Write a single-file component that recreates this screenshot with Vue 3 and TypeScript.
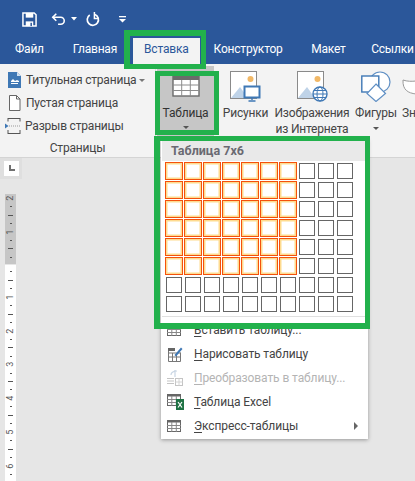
<script setup lang="ts">
interface MenuRow {
  key: string;
  label: string;
  hotkey: string;
  disabled?: boolean;
  submenu?: boolean;
}

const tabs = ['Файл', 'Главная', 'Вставка', 'Конструктор', 'Макет', 'Ссылки'];
const activeTab = 'Вставка';

const selCols = 7;
const selRows = 6;
const cells: boolean[] = [];
for (let r = 0; r < 8; r++) {
  for (let c = 0; c < 10; c++) {
    cells.push(r < selRows && c < selCols);
  }
}

const menuRows: MenuRow[] = [
  { key: 'insert', hotkey: 'В', label: 'ставить таблицу...' },
  { key: 'draw', hotkey: 'Н', label: 'арисовать таблицу' },
  { key: 'convert', hotkey: 'П', label: 'реобразовать в таблицу...', disabled: true },
  { key: 'excel', hotkey: 'Т', label: 'аблица Excel' },
  { key: 'quick', hotkey: 'Э', label: 'кспресс-таблицы', submenu: true },
];

// ruler marks: 4 per cm, digit on every 4th
const ticksTop = [
  { t: 'num', v: '2' }, { t: 's' }, { t: 'l' }, { t: 's' },
  { t: 'num', v: '1' }, { t: 's' }, { t: 'l' }, { t: 's' },
];
const ticksBottom: { t: string; v?: string }[] = [];
for (let n = 1; n <= 6; n++) {
  ticksBottom.push({ t: 's' }, { t: 'l' }, { t: 's' }, { t: 'num', v: String(n) });
}
ticksBottom.push({ t: 's' });
</script>

<template>
  <div class="word">
    <header class="titlebar">
      <div class="qat">
        <svg class="qat-save" width="15" height="15" viewBox="0 0 16 16">
          <path d="M1 1h12l2 2v12H1z" fill="none" stroke="#fff" stroke-width="1.6" />
          <rect x="4" y="1" width="8" height="5" fill="#fff" />
          <rect x="4" y="10" width="8" height="5" fill="#fff" />
          <rect x="9" y="11.5" width="1.6" height="3.5" fill="#2b579a" />
        </svg>
        <svg class="qat-undo" width="15" height="14" viewBox="0 0 17 15">
          <path d="M2 5.500h9a4 4 0 0 1 0 8H8" fill="none" stroke="#fff" stroke-width="1.8" />
          <path d="M6 1.500 2 5.500l4 4" fill="none" stroke="#fff" stroke-width="1.8" />
        </svg>
        <svg class="qat-caret" width="6" height="4" viewBox="0 0 6 4"><path d="M0 0h6L3 3.500z" fill="#fff" /></svg>
        <svg class="qat-redo" width="14" height="15" viewBox="0 0 15 16">
          <path d="M9.500 2.600a6 6 0 1 1-5.500 .6" fill="none" stroke="#fff" stroke-width="1.8" />
          <path d="M9 0v7H14" fill="none" stroke="#fff" stroke-width="1.6" />
        </svg>
        <svg class="qat-more" width="7" height="7" viewBox="0 0 7 7">
          <rect x="0" y="0" width="7" height="1.3" fill="#fff" />
          <path d="M0 3h7L3.500 6.600z" fill="#fff" />
        </svg>
      </div>
      <nav class="tabs">
        <span v-for="tab in tabs" :key="tab" class="tab" :class="{ active: tab === activeTab }">{{ tab }}</span>
      </nav>
    </header>

    <section class="ribbon">
      <div class="group pages">
        <div class="page-rows">
          <div class="page-row">
            <svg width="13" height="16" viewBox="0 0 13 16">
              <path d="M0 0h9l4 4v12H0z" fill="#3f78b5" />
              <path d="M9 0v4h4z" fill="#cfe0f0" />
              <path d="M3 9l2-2 2 2 2-1 2 1v1H3z" fill="#fff" />
              <rect x="3" y="11" width="7" height="1" fill="#fff" />
            </svg>
            <span>Титульная страница</span>
            <i class="caret"></i>
          </div>
          <div class="page-row">
            <svg width="13" height="16" viewBox="0 0 13 16">
              <path d="M1.500 .5h7l3.500 3.500v11.500H1.500z" fill="#fff" stroke="#666" />
              <path d="M8.500 .5v3.500H12" fill="none" stroke="#666" />
            </svg>
            <span>Пустая страница</span>
          </div>
          <div class="page-row">
            <svg class="break-icon" width="16" height="16" viewBox="0 0 16 16">
              <path d="M3 .5h12M3 15.500h12M3 0v3.500M15 0v3.500M3 12v4M15 12v4" fill="none" stroke="#555" />
              <path d="M0 5.500l3.500 2.500L0 10.500z" fill="#3f78b5" />
              <path d="M4 8h11" stroke="#999" stroke-dasharray="1 1" />
            </svg>
            <span>Разрыв страницы</span>
          </div>
        </div>
        <div class="group-label">Страницы</div>
      </div>

      <div class="table-btn">
        <svg width="28" height="22" viewBox="0 0 28 22">
          <rect x="1" y="1" width="26" height="20" fill="#fff" stroke="#6b6b6b" stroke-width="1.400" />
          <rect x="1" y="1" width="26" height="4" fill="#6b6b6b" />
          <path d="M1 10h26M1 15.500h26M9.700 5v16M18.300 5v16" stroke="#8c8c8c" stroke-width="1" />
        </svg>
        <span class="big-label">Таблица</span>
        <i class="caret dark"></i>
      </div>

      <div class="big-btn pictures">
        <svg width="31" height="31" viewBox="0 0 31 31">
          <rect x=".5" y=".5" width="26" height="27" fill="#fff" stroke="#8a8a8a" />
          <circle cx="20.500" cy="8" r="3" fill="#f1b867" />
          <path d="M1 27l9-11 8 11z" fill="#bfd3e8" />
          <rect x="14.500" y="15.500" width="15" height="11" fill="#fff" stroke="#3f78b5" stroke-width="2" />
          <path d="M22 27v2M18.500 30h7" stroke="#3f78b5" stroke-width="1.400" />
        </svg>
        <span class="big-label">Рисунки</span>
      </div>

      <div class="big-btn online">
        <svg width="31" height="31" viewBox="0 0 31 31">
          <rect x=".5" y=".5" width="26" height="27" fill="#fff" stroke="#8a8a8a" />
          <circle cx="20.500" cy="8" r="3" fill="#f1b867" />
          <path d="M1 27l9-11 8 11z" fill="#bfd3e8" />
          <circle cx="23" cy="23" r="7" fill="#fff" stroke="#3f78b5" stroke-width="1.400" />
          <ellipse cx="23" cy="23" rx="3" ry="7" fill="none" stroke="#3f78b5" />
          <path d="M16 23h14M17 19.500h12M17 26.500h12" stroke="#3f78b5" />
        </svg>
        <span class="big-label">Изображения<br />из Интернета</span>
      </div>

      <div class="big-btn shapes">
        <svg width="30" height="31" viewBox="0 0 30 31">
          <circle cx="19" cy="11" r="10" fill="#fff" stroke="#5f8fc4" stroke-width="1.200" />
          <rect x=".8" y="5" width="17" height="16" fill="#fff" stroke="#3f78b5" stroke-width="1.400" />
          <path d="M15 13l9.500 9.500-9.500 8-9-8z" fill="#fff" stroke="#5f8fc4" stroke-width="1.200" />
        </svg>
        <span class="big-label">Фигуры</span>
        <i class="caret dark"></i>
      </div>

      <div class="big-btn signs">
        <svg width="14" height="17" viewBox="0 0 14 17">
          <path d="M14 15C6 14 .5 11 1 1c4 1.500 9 1.500 13 1" fill="#fff" stroke="#9a9a9a" />
        </svg>
        <span class="big-label">Зн</span>
      </div>
    </section>

    <main class="workspace">
      <aside class="side">
        <div class="corner"><span class="corner-mark"></span></div>
        <div class="ruler">
          <div class="ruler-dark">
            <span v-for="(m, i) in ticksTop" :key="i" class="mark" :class="m.t">{{ m.v }}</span>
          </div>
          <div class="ruler-white">
            <span v-for="(m, i) in ticksBottom" :key="i" class="mark" :class="m.t">{{ m.v }}</span>
          </div>
        </div>
      </aside>

      <div class="table-menu">
        <div class="menu-head">Таблица 7x6</div>
        <div class="picker">
          <span v-for="(sel, i) in cells" :key="i" class="cell" :class="{ sel }"></span>
        </div>
        <div class="menu-sep"></div>
        <div v-for="row in menuRows" :key="row.key" class="menu-row" :class="{ disabled: row.disabled }">
          <span class="menu-icon">
            <svg v-if="row.key === 'insert' || row.key === 'quick'" width="14" height="12" viewBox="0 0 14 12">
              <rect x=".5" y=".5" width="13" height="11" fill="#fff" stroke="#666" />
              <rect x="0" y="0" width="14" height="2.500" fill="#666" />
              <path d="M0 5.500h14M0 8.500h14M4.800 2v10M9.300 2v10" stroke="#888" />
            </svg>
            <svg v-else-if="row.key === 'draw'" width="16" height="16" viewBox="0 0 16 16">
              <path d="M1.500 2.500v13h12v-9M1.500 7h12M1.500 11h12M5.500 7v8.500M9.500 7v8.500" fill="none" stroke="#777" />
              <rect x="1" y="2" width="7" height="3" fill="#666" />
              <path d="M7.500 9 14 1.500l1.500 1.500L9 10.500z" fill="#3f78b5" />
            </svg>
            <svg v-else-if="row.key === 'convert'" width="16" height="16" viewBox="0 0 16 16">
              <path d="M0 8.500h7M0 11h7M0 13.500h7" stroke="#c4c4c4" />
              <rect x="8.500" y="8.500" width="7" height="7" fill="none" stroke="#c4c4c4" />
              <path d="M8.500 12h7M12 8.500v7" stroke="#d4d4d4" />
              <path d="M4 5c0-3 3-4 6-4M8 0v7" fill="none" stroke="#c9d6e4" stroke-width="1.200" />
            </svg>
            <svg v-else width="17" height="16" viewBox="0 0 17 16">
              <rect x=".5" y=".5" width="13" height="11" fill="#fff" stroke="#666" />
              <rect x="0" y="0" width="14" height="2.500" fill="#666" />
              <path d="M0 5.500h14M0 8.500h14M4.800 2v10M9.300 2v10" stroke="#888" />
              <rect x="9" y="5" width="8" height="11" fill="#1f7244" />
              <path d="M11 8l4 5.500M15 8l-4 5.500" stroke="#fff" stroke-width="1.200" />
            </svg>
          </span>
          <span class="menu-text"><u>{{ row.hotkey }}</u>{{ row.label }}</span>
          <i v-if="row.submenu" class="sub-arrow"></i>
        </div>
      </div>

      <div class="frame frame-tab"></div>
      <div class="frame frame-btn"></div>
      <div class="frame frame-grid"></div>
    </main>
  </div>
</template>

<style scoped>
.word {
  position: relative;
  width: 415px;
  height: 481px;
  overflow: hidden;
  display: flex;
  flex-direction: column;
  background: #e6e6e6;
  font-family: Roboto, "Open Sans", sans-serif;
  font-size: 12px;
  letter-spacing: -0.2px;
  color: #444;
}

.titlebar {
  height: 64px;
  background: #2b579a;
  display: flex;
  flex-direction: column;
  flex: none;
}

.qat {
  height: 38px;
  display: flex;
  align-items: center;
  padding-left: 22px;
}
.qat-undo { margin-left: 14px; }
.qat-caret { margin-left: 5px; }
.qat-redo { margin-left: 9px; }
.qat-more { margin-left: 19px; }

.tabs {
  height: 26px;
  display: flex;
  white-space: nowrap;
}
.tab {
  color: #fff;
  line-height: 22px;
  padding: 0 13.5px;
}
.tab:first-child { padding: 0 15.5px 0 15px; }
.tab:nth-child(4) { padding: 0 15px 0 12px; }
.tab:nth-child(5) { padding-right: 12px; }
.tab.active {
  background: #f3f3f3;
  color: #2b579a;
  border-left: 2px solid #2b579a;
  border-right: 2px solid #2b579a;
  padding: 0 11px 0 11.5px;
}

.ribbon {
  height: 93px;
  flex: none;
  background: #f3f3f3;
  border-bottom: 1px solid #d4d4d4;
  display: flex;
  white-space: nowrap;
  color: #444;
}

.group.pages {
  width: 155px;
  flex: none;
  display: flex;
  flex-direction: column;
  border-right: 1px solid #dcdcdc;
}
.page-rows {
  padding: 5px 0 0 8px;
  display: flex;
  flex-direction: column;
  gap: 1px;
  flex: 1;
}
.page-row {
  height: 22px;
  display: flex;
  align-items: center;
  gap: 5px;
}
.page-row svg { flex: none; width: 13px; }
.page-row .break-icon { width: 16px; margin-left: -3px; margin-right: -1px; }
.group-label {
  text-align: center;
  line-height: 22px;
  margin-bottom: -2px;
  padding-bottom: 0;
}

.caret {
  display: inline-block;
  width: 0;
  height: 0;
  border-left: 3.5px solid transparent;
  border-right: 3.5px solid transparent;
  border-top: 3.5px solid #777;
  margin-left: -2px;
}
.caret.dark { border-top-color: #555; margin-left: 0; }

.table-btn {
  width: 57px;
  margin: 2px 0 0 1px;
  flex: none;
  height: 70px;
  background: #c6c6c6;
  display: flex;
  flex-direction: column;
  align-items: center;
  padding-top: 9px;
  box-sizing: border-box;
  color: #333;
}
.big-label {
  display: block;
  text-align: center;
  line-height: 16px;
}
.table-btn .big-label { margin-top: 8px; margin-bottom: 5px; }

.big-btn {
  flex: none;
  display: flex;
  flex-direction: column;
  align-items: center;
  padding-top: 7px;
  box-sizing: border-box;
}
.big-btn svg { flex: none; }
.big-btn .big-label { margin-top: 3px; }
.big-btn .caret { margin-top: 6px; }
.pictures { width: 53px; margin-left: 5px; }
.online { width: 80px; }
.shapes { width: 44px; margin-left: 2px; }
.signs { width: 17px; align-items: flex-start; padding-left: 4px; }
.signs svg { margin: 8px 0 6px 0; }
.signs .big-label { margin-top: 3px; }

.workspace {
  position: relative;
  flex: 1;
  min-height: 0;
}

.side {
  width: 22px;
  display: flex;
  flex-direction: column;
}
.corner {
  width: 22px;
  height: 21px;
  background: #dfdfdf;
  display: flex;
  align-items: center;
  justify-content: center;
}
.corner-mark {
  width: 15px;
  height: 15px;
  background: #fff;
  display: block;
}
.corner-mark::after {
  content: "";
  display: block;
  width: 6px;
  height: 6px;
  margin: 4px 0 0 5px;
  border-left: 2px solid #707070;
  border-bottom: 2px solid #707070;
  box-sizing: border-box;
}
.ruler {
  margin: 15px 0 0 5px;
  width: 11px;
}
.ruler-dark {
  height: 70px;
  background: #c6c6c6;
}
.ruler-white {
  height: 220px;
  background: #fff;
  margin-top: 1px;
  padding-top: 2.6px;
  box-sizing: border-box;
  overflow: hidden;
}
.mark {
  height: 8.45px;
  display: flex;
  align-items: center;
  justify-content: center;
  color: #555;
  font-size: 9px;
  line-height: 1;
}
.mark.s::before {
  content: "";
  width: 2px;
  height: 1px;
  background: #555;
}
.mark.l::before {
  content: "";
  width: 5px;
  height: 1px;
  background: #555;
}
.mark.num { transform: rotate(-90deg); }

.table-menu {
  position: absolute;
  left: 161px;
  top: -19px;
  width: 207px;
  height: 300px;
  background: #fff;
  box-shadow: 0 1px 4px rgba(0, 0, 0, .35);
  box-sizing: border-box;
}
.menu-head {
  height: 20px;
  margin: 2px 1px 0;
  background: #e9e9e9;
  font-weight: 700;
  font-size: 12.5px;
  letter-spacing: 0;
  line-height: 20px;
  padding-left: 9px;
  color: #6a6a72;
}
.picker {
  display: grid;
  grid-template-columns: repeat(10, 16px);
  grid-auto-rows: 16px;
  gap: 3px;
  padding: 2px 0 0 5px;
}
.cell {
  border: 1.5px solid #666;
  box-sizing: border-box;
  background: #fff;
}
.cell.sel {
  margin: -1px;
  border: 1.5px solid #f4510c;
  box-shadow: inset 0 0 0 1.5px #fedb8f;
}
.menu-sep {
  height: 1px;
  background: #e0e0e0;
  margin: 4px 1px 1px;
}
.menu-row {
  height: 24px;
  display: flex;
  align-items: center;
  color: #444;
  letter-spacing: -0.1px;
}
.menu-row.disabled { color: #b4b4b4; }
.menu-icon {
  width: 33px;
  padding-left: 6px;
  box-sizing: border-box;
  display: flex;
  justify-content: flex-start;
}
.menu-text { white-space: nowrap; }
.menu-text u { text-underline-offset: 2px; }
.sub-arrow {
  margin-left: auto;
  margin-right: 10px;
  width: 0;
  height: 0;
  border-top: 4px solid transparent;
  border-bottom: 4px solid transparent;
  border-left: 4px solid #666;
}

.frame {
  position: absolute;
  border: 5px solid #22b14c;
  box-sizing: border-box;
  pointer-events: none;
}
.frame-tab { left: 124px; top: -128px; width: 82px; height: 39px; border-width: 6px 5px 5px 6px; }
.frame-btn { left: 155px; top: -87px; width: 64px; height: 64px; }
.frame-grid { left: 154px; top: -22px; width: 216px; height: 193px; border-width: 5px 5px 6px 6px; }
</style>
